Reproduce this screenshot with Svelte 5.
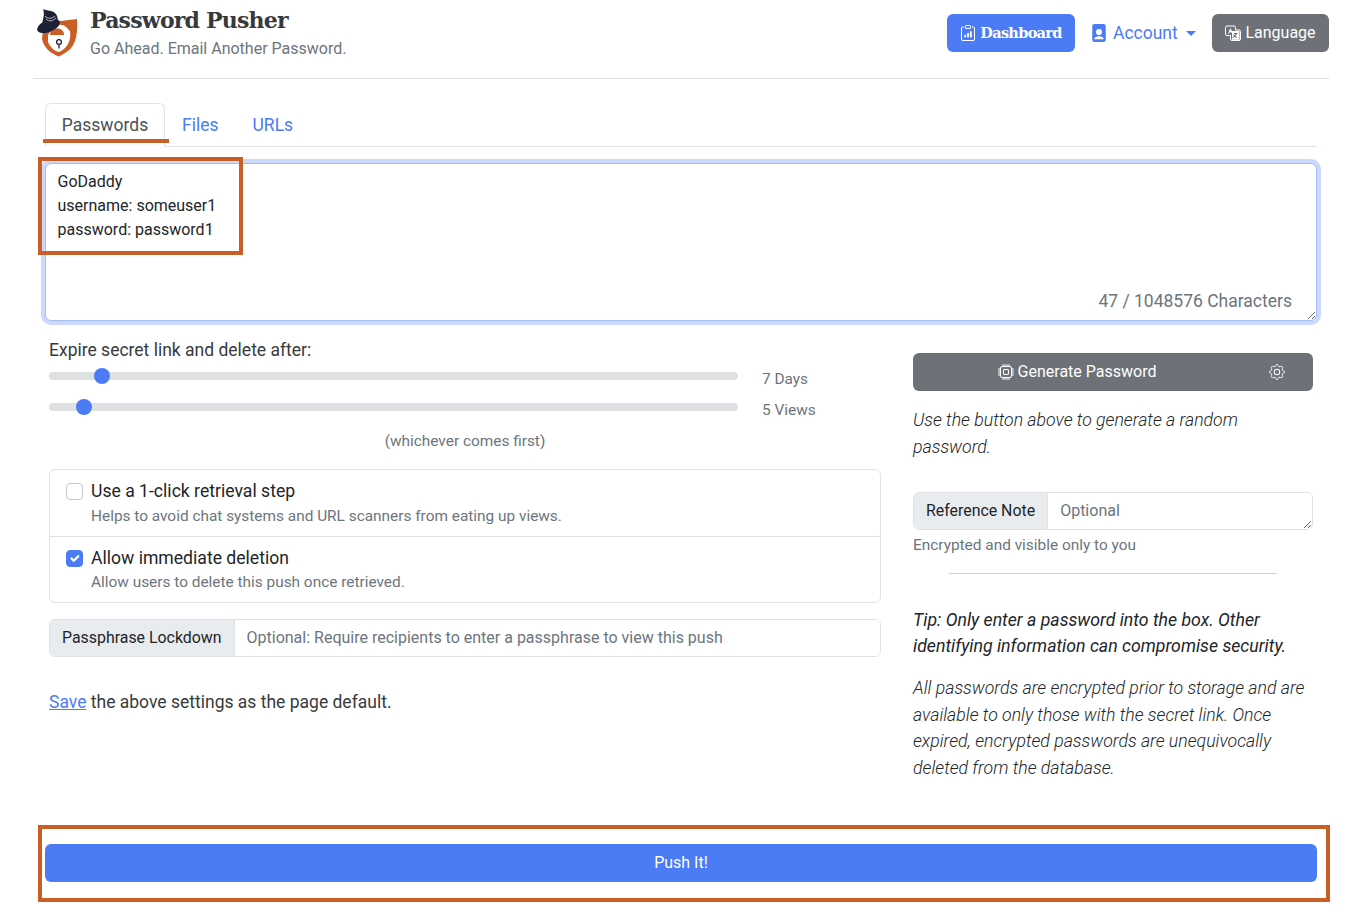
<script>
  let day = 7;
  let views = 5;
  let note = "GoDaddy\nusername: someuser1\npassword: password1";
</script>

<div class="page">
  <header class="head">
    <div class="brand">
      <svg class="logo" viewBox="0 0 42 50" aria-hidden="true">
        <path d="M7 15 L40 11 C41 25 39 37 31 43 C28 45 25 47 22 48.500 C15 46 7 41 5 31Z" fill="#c95f24"/>
        <path d="M11 27 C14 23 16 19 22 17 C27 16 30 20 33 23 C34 30 32 36 28 40 C26 42 24 43 22 44 C17 43 13 39 11 34Z" fill="#fff"/>
        <path d="M13 27 C13 19 27 18 27 27Z" fill="#c95f24"/>
        <circle cx="22" cy="34" r="2.400" fill="none" stroke="#1c2233" stroke-width="1.300"/>
        <path d="M22 36.500 V40.500" stroke="#1c2233" stroke-width="1.300"/>
        <ellipse cx="11.500" cy="18" rx="12" ry="6" transform="rotate(-22 11.500 18)" fill="#1c2233"/>
        <path d="M5 17 C6 10 8 6 6 1 C10 3 16 2 19 6 C21 9 21 12 20 15Z" fill="#1c2233"/>
        <path d="M8 8 C10 11 15 11 18 8 M9 11 C12 14 16 13 19 10" stroke="#d9dbe2" stroke-width="0.800" fill="none"/>
      </svg>
      <div>
        <h1>Password Pusher</h1>
        <p>Go Ahead. Email Another Password.</p>
      </div>
    </div>
    <nav class="topnav">
      <button class="btn primary slab">
        <svg viewBox="0 0 16 16" class="ic"><path d="M4 1.500H3a2 2 0 0 0-2 2V14a2 2 0 0 0 2 2h10a2 2 0 0 0 2-2V3.500a2 2 0 0 0-2-2h-1v1h1a1 1 0 0 1 1 1V14a1 1 0 0 1-1 1H3a1 1 0 0 1-1-1V3.500a1 1 0 0 1 1-1h1v-1z"/><path d="M9.500 1a.5.5 0 0 1 .5.5v1a.5.5 0 0 1-.5.5h-3a.5.5 0 0 1-.5-.5v-1a.5.5 0 0 1 .5-.5h3zm-3-1A1.500 1.500 0 0 0 5 1.500v1A1.500 1.500 0 0 0 6.500 4h3A1.500 1.500 0 0 0 11 2.500v-1A1.500 1.500 0 0 0 9.500 0h-3z"/><path d="M4 11a1 1 0 1 1 2 0v1a1 1 0 1 1-2 0v-1zm3-2a1 1 0 1 1 2 0v3a1 1 0 1 1-2 0V9zm3-2a1 1 0 1 1 2 0v5a1 1 0 1 1-2 0V7z" transform="translate(.5 .3) scale(.94)"/></svg>
        Dashboard
      </button>
      <a class="account" href="#account">
        <svg viewBox="0 0 16 16" class="ic big"><path d="M4 0h8a2 2 0 0 1 2 2v12a2 2 0 0 1-2 2H4a2 2 0 0 1-2-2V2a2 2 0 0 1 2-2zm4 4.500a2.700 2.700 0 1 0 0 5.400 2.700 2.700 0 0 0 0-5.400zM3.500 13.500h9c-.6-1.800-2.400-2.700-4.500-2.700s-3.900.9-4.500 2.700z"/></svg>
        Account
        <span class="caret"></span>
      </a>
      <button class="btn secondary">
        <svg viewBox="0 0 16 16" class="ic"><path d="M2 1h7a1.500 1.500 0 0 1 1.500 1.500V5H14a1.500 1.500 0 0 1 1.500 1.500V14a1.500 1.500 0 0 1-1.500 1.500H7A1.500 1.500 0 0 1 5.500 14v-3.500H2A1.500 1.500 0 0 1 .5 9V2.500A1.500 1.500 0 0 1 2 1z" fill="none" stroke="currentColor"/><path d="M5.500 3 L3 8.500 H4.200 L4.700 7.200 H6.300 L6.800 8.500 H8 L5.500 3z" /><path d="M7 6h7.500v8.800H7z" fill="currentColor"/><path d="M9 8h3.500v1h-.9c-.2.900-.6 1.700-1.100 2.300.4.300.9.500 1.600.6l-.4 1c-.8-.2-1.400-.5-1.900-.9-.5.400-1.200.7-2 .9l-.4-1c.7-.1 1.200-.4 1.600-.7-.4-.5-.7-1.100-.9-1.700h1c.2.400.3.700.5 1 .3-.4.500-.9.600-1.500H9z" fill="#6e7278"/></svg>
        Language
      </button>
    </nav>
  </header>

  <main class="body">
    <ul class="tabs">
      <li class="tab active">Passwords</li>
      <li class="tab">Files</li>
      <li class="tab">URLs</li>
    </ul>

    <div class="secret">
      <textarea class="secret-input" value={note}></textarea>
      <span class="count">47 / 1048576 Characters</span>
    </div>

    <div class="cols">
      <section class="left">
        <div class="label">Expire secret link and delete after:</div>
        <div class="slide first">
          <input type="range" min="1" max="90" bind:value={day} />
          <span>7 Days</span>
        </div>
        <div class="slide">
          <input type="range" min="1" max="100" bind:value={views} />
          <span>5 Views</span>
        </div>
        <div class="either">(whichever comes first)</div>

        <div class="list">
          <label class="item">
            <input type="checkbox" />
            <span class="item-text">
              <span class="item-title">Use a 1-click retrieval step</span>
              <span class="item-sub">Helps to avoid chat systems and URL scanners from eating up views.</span>
            </span>
          </label>
          <label class="item">
            <input type="checkbox" checked />
            <span class="item-text">
              <span class="item-title">Allow immediate deletion</span>
              <span class="item-sub">Allow users to delete this push once retrieved.</span>
            </span>
          </label>
        </div>

        <div class="group pass">
          <span class="addon">Passphrase Lockdown</span>
          <input class="field" placeholder="Optional: Require recipients to enter a passphrase to view this push" />
        </div>

        <p class="save"><a href="#save">Save</a> the above settings as the page default.</p>
      </section>

      <aside class="right">
        <button class="btn secondary gen">
          <span class="gen-label">
            <svg viewBox="0 0 16 16" class="ic"><path d="M5 0a.5.5 0 0 1 .5.5V2h1V.5a.5.5 0 0 1 1 0V2h1V.5a.5.5 0 0 1 1 0V2h1V.5a.5.5 0 0 1 1 0V2A2.500 2.500 0 0 1 14 4.500h1.500a.5.5 0 0 1 0 1H14v1h1.500a.5.5 0 0 1 0 1H14v1h1.500a.5.5 0 0 1 0 1H14v1h1.500a.5.5 0 0 1 0 1H14a2.500 2.500 0 0 1-2.500 2.500v1.500a.5.5 0 0 1-1 0V14h-1v1.500a.5.5 0 0 1-1 0V14h-1v1.500a.5.5 0 0 1-1 0V14h-1v1.500a.5.5 0 0 1-1 0V14A2.500 2.500 0 0 1 2 11.500H.5a.5.5 0 0 1 0-1H2v-1H.5a.5.5 0 0 1 0-1H2v-1H.5a.5.5 0 0 1 0-1H2v-1H.5a.5.5 0 0 1 0-1H2A2.500 2.500 0 0 1 4.500 2V.5A.5.5 0 0 1 5 0zm-.5 3A1.500 1.500 0 0 0 3 4.500v7A1.500 1.500 0 0 0 4.500 13h7a1.500 1.500 0 0 0 1.500-1.500v-7A1.500 1.500 0 0 0 11.500 3h-7zM5 6.500A1.500 1.500 0 0 1 6.500 5h3A1.500 1.500 0 0 1 11 6.500v3A1.500 1.500 0 0 1 9.500 11h-3A1.500 1.500 0 0 1 5 9.500v-3zM6.500 6a.5.5 0 0 0-.5.5v3a.5.5 0 0 0 .5.5h3a.5.5 0 0 0 .5-.5v-3a.5.5 0 0 0-.5-.5h-3z"/></svg>
            Generate Password
          </span>
          <svg viewBox="0 0 16 16" class="ic gear"><path d="M8 4.754a3.246 3.246 0 1 0 0 6.492 3.246 3.246 0 0 0 0-6.492zM5.754 8a2.246 2.246 0 1 1 4.492 0 2.246 2.246 0 0 1-4.492 0z"/><path fill="none" stroke="currentColor" stroke-width="1" d="M9.300 1.500c-.4-1.300-2.200-1.300-2.600 0l-.1.300a1.370 1.370 0 0 1-2 .8l-.3-.1c-1.200-.7-2.500.6-1.800 1.800l.1.300a1.370 1.370 0 0 1-.8 2l-.3.100c-1.300.4-1.300 2.200 0 2.600l.3.100a1.370 1.370 0 0 1 .8 2l-.1.300c-.7 1.200.6 2.500 1.800 1.800l.3-.1a1.370 1.370 0 0 1 2 .8l.1.300c.4 1.300 2.200 1.300 2.600 0l.1-.3a1.370 1.370 0 0 1 2-.8l.3.100c1.200.7 2.500-.6 1.800-1.800l-.1-.3a1.370 1.370 0 0 1 .8-2l.3-.1c1.300-.4 1.300-2.200 0-2.600l-.3-.1a1.370 1.370 0 0 1-.8-2l.1-.3c.7-1.200-.6-2.500-1.800-1.800l-.3.1a1.370 1.370 0 0 1-2-.8z"/></svg>
        </button>
        <p class="lead first-lead">Use the button above to generate a random password.</p>

        <div class="group note">
          <span class="addon">Reference Note</span>
          <textarea class="field" placeholder="Optional" rows="1"></textarea>
        </div>
        <div class="hint">Encrypted and visible only to you</div>
        <hr />
        <p class="lead tip">Tip: Only enter a password into the box. Other identifying information can compromise security.</p>
        <p class="lead">All passwords are encrypted prior to storage and are available to only those with the secret link. Once expired, encrypted passwords are unequivocally deleted from the database.</p>
      </aside>
    </div>

    <button class="btn primary push">Push It!</button>
  </main>

  <div class="mark mark-tab"></div>
  <div class="mark mark-text"></div>
  <div class="mark mark-push"></div>
</div>

<style>
  :global(body) {
    margin: 0;
    background: #fff;
    color: #212529;
    font-family: Roboto, "Liberation Sans", sans-serif;
    font-size: 16px;
    line-height: 1.5;
  }
  .page {
    position: relative;
    height: 918px;
    overflow: hidden;
    padding: 0 30px 0 33px;
    box-sizing: border-box;
  }
  .head {
    height: 79px;
    box-sizing: border-box;
    border-bottom: 1px solid #dee2e6;
    display: flex;
    justify-content: space-between;
  }
  .brand {
    display: flex;
    gap: 11px;
    padding-left: 4px;
  }
  .logo {
    width: 42px;
    height: 50px;
    margin-top: 8px;
  }
  h1 {
    margin: 4px 0 0;
    font-family: "DejaVu Serif", serif;
    font-size: 22px;
    line-height: 32px;
    font-weight: 700;
    color: #373a3c;
    letter-spacing: -0.8px;
  }
  .brand p {
    margin: 1px 0 0;
    line-height: 24px;
    color: #6c757d;
  }
  .topnav {
    display: flex;
    align-items: flex-start;
    padding-top: 14px;
  }
  .btn {
    border: 0;
    border-radius: 6px;
    height: 38px;
    font: inherit;
    color: #fff;
    padding: 0 13px;
    display: inline-flex;
    align-items: center;
    justify-content: center;
    gap: 4px;
  }
  .primary { background: #4b7bf5; }
  .secondary { background: #6e7278; }
  .slab {
    font-family: "DejaVu Serif", serif;
    font-weight: 700;
    font-size: 14.500px;
    letter-spacing: -0.7px;
    width: 128px;
    padding: 0;
  }
  .ic {
    width: 16px;
    height: 16px;
    fill: currentColor;
    flex: none;
  }
  .ic.big { width: 18px; height: 18px; }
  .account {
    width: 107px;
    margin: 0 15px 0 15px;
    height: 38px;
    display: inline-flex;
    align-items: center;
    gap: 5px;
    color: #4b7bf5;
    font-size: 17.500px;
    text-decoration: none;
    white-space: nowrap;
  }
  .caret {
    margin-left: 3px;
    border-top: 5px solid #4b7bf5;
    border-left: 5px solid transparent;
    border-right: 5px solid transparent;
  }
  .topnav .secondary { width: 117px; padding: 0; }

  .body {
    padding: 24px 12px 0;
  }
  .tabs {
    list-style: none;
    margin: 0;
    padding: 0;
    display: flex;
    height: 44px;
    box-sizing: border-box;
    border-bottom: 1px solid #dee2e6;
  }
  .tab {
    padding: 0 17px;
    height: 44px;
    font-size: 17.500px;
    line-height: 45px;
    color: #4b7bf5;
    box-sizing: border-box;
  }
  .tab.active {
    width: 120px;
    padding: 0;
    text-align: center;
    color: #495057;
    background: #fff;
    border: 1px solid #dee2e6;
    border-bottom-color: #fff;
    border-radius: 6px 6px 0 0;
    height: 44px;
    line-height: 42px;
  }
  .secret {
    position: relative;
    margin-top: 16px;
    height: 158px;
  }
  .secret-input {
    display: block;
    width: 100%;
    height: 158px;
    box-sizing: border-box;
    padding: 6px 12px 6px 11.500px;
    font: inherit;
    color: #212529;
    line-height: 24px;
    border: 1px solid #a5bdfa;
    border-radius: 6px;
    outline: 0;
    box-shadow: 0 0 0 4px #ccd9fc;
  }
  .count {
    position: absolute;
    right: 25px;
    bottom: 8px;
    font-size: 17.500px;
    color: #6c757d;
    line-height: 24px;
  }
  .cols {
    display: grid;
    grid-template-columns: 832px 400px;
    gap: 32px;
    padding: 0 4px;
    margin-top: 17px;
  }
  .label {
    font-size: 17.500px;
    line-height: 24px;
    color: #373a3c;
  }
  .slide {
    display: flex;
    align-items: flex-start;
    height: 31px;
    gap: 24px;
  }
  .slide.first { margin-top: -2px; }
  .slide span {
    font-size: 15.400px;
    color: #6c757d;
    line-height: 20px;
    margin-top: 9px;
  }
  input[type="range"] {
    appearance: none;
    -webkit-appearance: none;
    width: 689px;
    height: 16px;
    margin: 8px 0 0;
    background: transparent;
  }
  input[type="range"]::-webkit-slider-runnable-track {
    height: 8px;
    border-radius: 4px;
    background: #dfe0e4;
  }
  input[type="range"]::-webkit-slider-thumb {
    -webkit-appearance: none;
    width: 16px;
    height: 16px;
    margin-top: -4px;
    border-radius: 50%;
    background: #4b7bf5;
  }
  .either {
    width: 832px;
    text-align: center;
    margin-top: 7px;
    font-size: 15.400px;
    line-height: 24px;
    color: #6c757d;
    box-sizing: border-box;
  }
  .list {
    margin-top: 16px;
    border: 1px solid #dee2e6;
    border-radius: 6px;
  }
  .item {
    display: flex;
    gap: 8px;
    height: 66px;
    box-sizing: border-box;
    padding: 9px 16px 0;
  }
  .item + .item { border-top: 1px solid #dee2e6; }
  .item:first-child .item-sub { margin-top: 1px; }
  .item input {
    appearance: none;
    -webkit-appearance: none;
    width: 17px;
    height: 17px;
    margin: 4px 0 0;
    border: 1px solid #c4c7cb;
    border-radius: 4px;
    background: #fff;
    flex: none;
    box-sizing: border-box;
  }
  .item input:checked {
    border-color: #4b7bf5;
    background-color: #4b7bf5;
    background-image: url("data:image/svg+xml,%3csvg xmlns='http://www.w3.org/2000/svg' viewBox='0 0 20 20'%3e%3cpath fill='none' stroke='%23fff' stroke-linecap='round' stroke-linejoin='round' stroke-width='3' d='M6 10l3 3l6-6'/%3e%3c/svg%3e");
  }
  .item-text { display: flex; flex-direction: column; }
  .item-title { font-size: 17.600px; line-height: 24px; color: #212529; }
  .item-sub { font-size: 15.400px; line-height: 24px; color: #6c757d; }
  .group {
    display: flex;
    height: 38px;
    box-sizing: border-box;
    border: 1px solid #dee2e6;
    border-radius: 6px;
    overflow: hidden;
  }
  .pass { margin-top: 16px; }
  .addon {
    background: #e9ecef;
    padding: 0 12px;
    line-height: 36px;
    border-right: 1px solid #dee2e6;
    white-space: nowrap;
    color: #212529;
    font-size: 15.900px;
  }
  .field {
    flex: 1;
    min-width: 0;
    border: 0;
    outline: 0;
    font: inherit;
    padding: 6px 12px;
    box-sizing: border-box;
    background: #fff;
    line-height: 24px;
  }
  .field::placeholder { color: #6c757d; opacity: 1; }
  .save {
    margin: 33px 0 0;
    font-size: 17.500px;
    line-height: 24px;
    color: #373a3c;
  }
  .save a { color: #4b7bf5; }

  .right { padding-top: 15px; }
  .gen {
    width: 100%;
    position: relative;
    padding: 0 72px 0 0;
  }
  .gen-label { display: inline-flex; align-items: center; gap: 4px; }
  .gear {
    position: absolute;
    right: 28px;
    top: 11px;
  }
  .lead {
    margin: 0 0 16px;
    font-size: 17.700px;
    line-height: 26.400px;
    font-weight: 300;
    font-style: italic;
    color: #212529;
  }
  .first-lead { margin-top: 16px; line-height: 27px; }
  .note { margin-top: 31px; height: 38px; }
  .note textarea { height: 36px; resize: vertical; display: block; }
  .hint {
    font-size: 15.400px;
    line-height: 21px;
    color: #6c757d;
    margin-top: 5px;
  }
  hr {
    width: 328px;
    margin: 17px auto 32.500px;
    border: 0;
    border-top: 1px solid #d0d2d5;
  }
  .tip { font-weight: 400; line-height: 26px; margin-bottom: 16.800px; }
  .push {
    display: flex;
    width: 100%;
    margin-top: 47px;
  }

  .mark {
    position: absolute;
    box-sizing: border-box;
    pointer-events: none;
  }
  .mark-tab {
    left: 43px;
    top: 139px;
    width: 126px;
    height: 4px;
    background: #c95f24;
  }
  .mark-text {
    left: 38px;
    top: 157px;
    width: 205px;
    height: 98px;
    border: 4px solid #c95f24;
  }
  .mark-push {
    left: 38px;
    top: 825px;
    width: 1292px;
    height: 77px;
    border: 4px solid #c95f24;
  }
</style>
